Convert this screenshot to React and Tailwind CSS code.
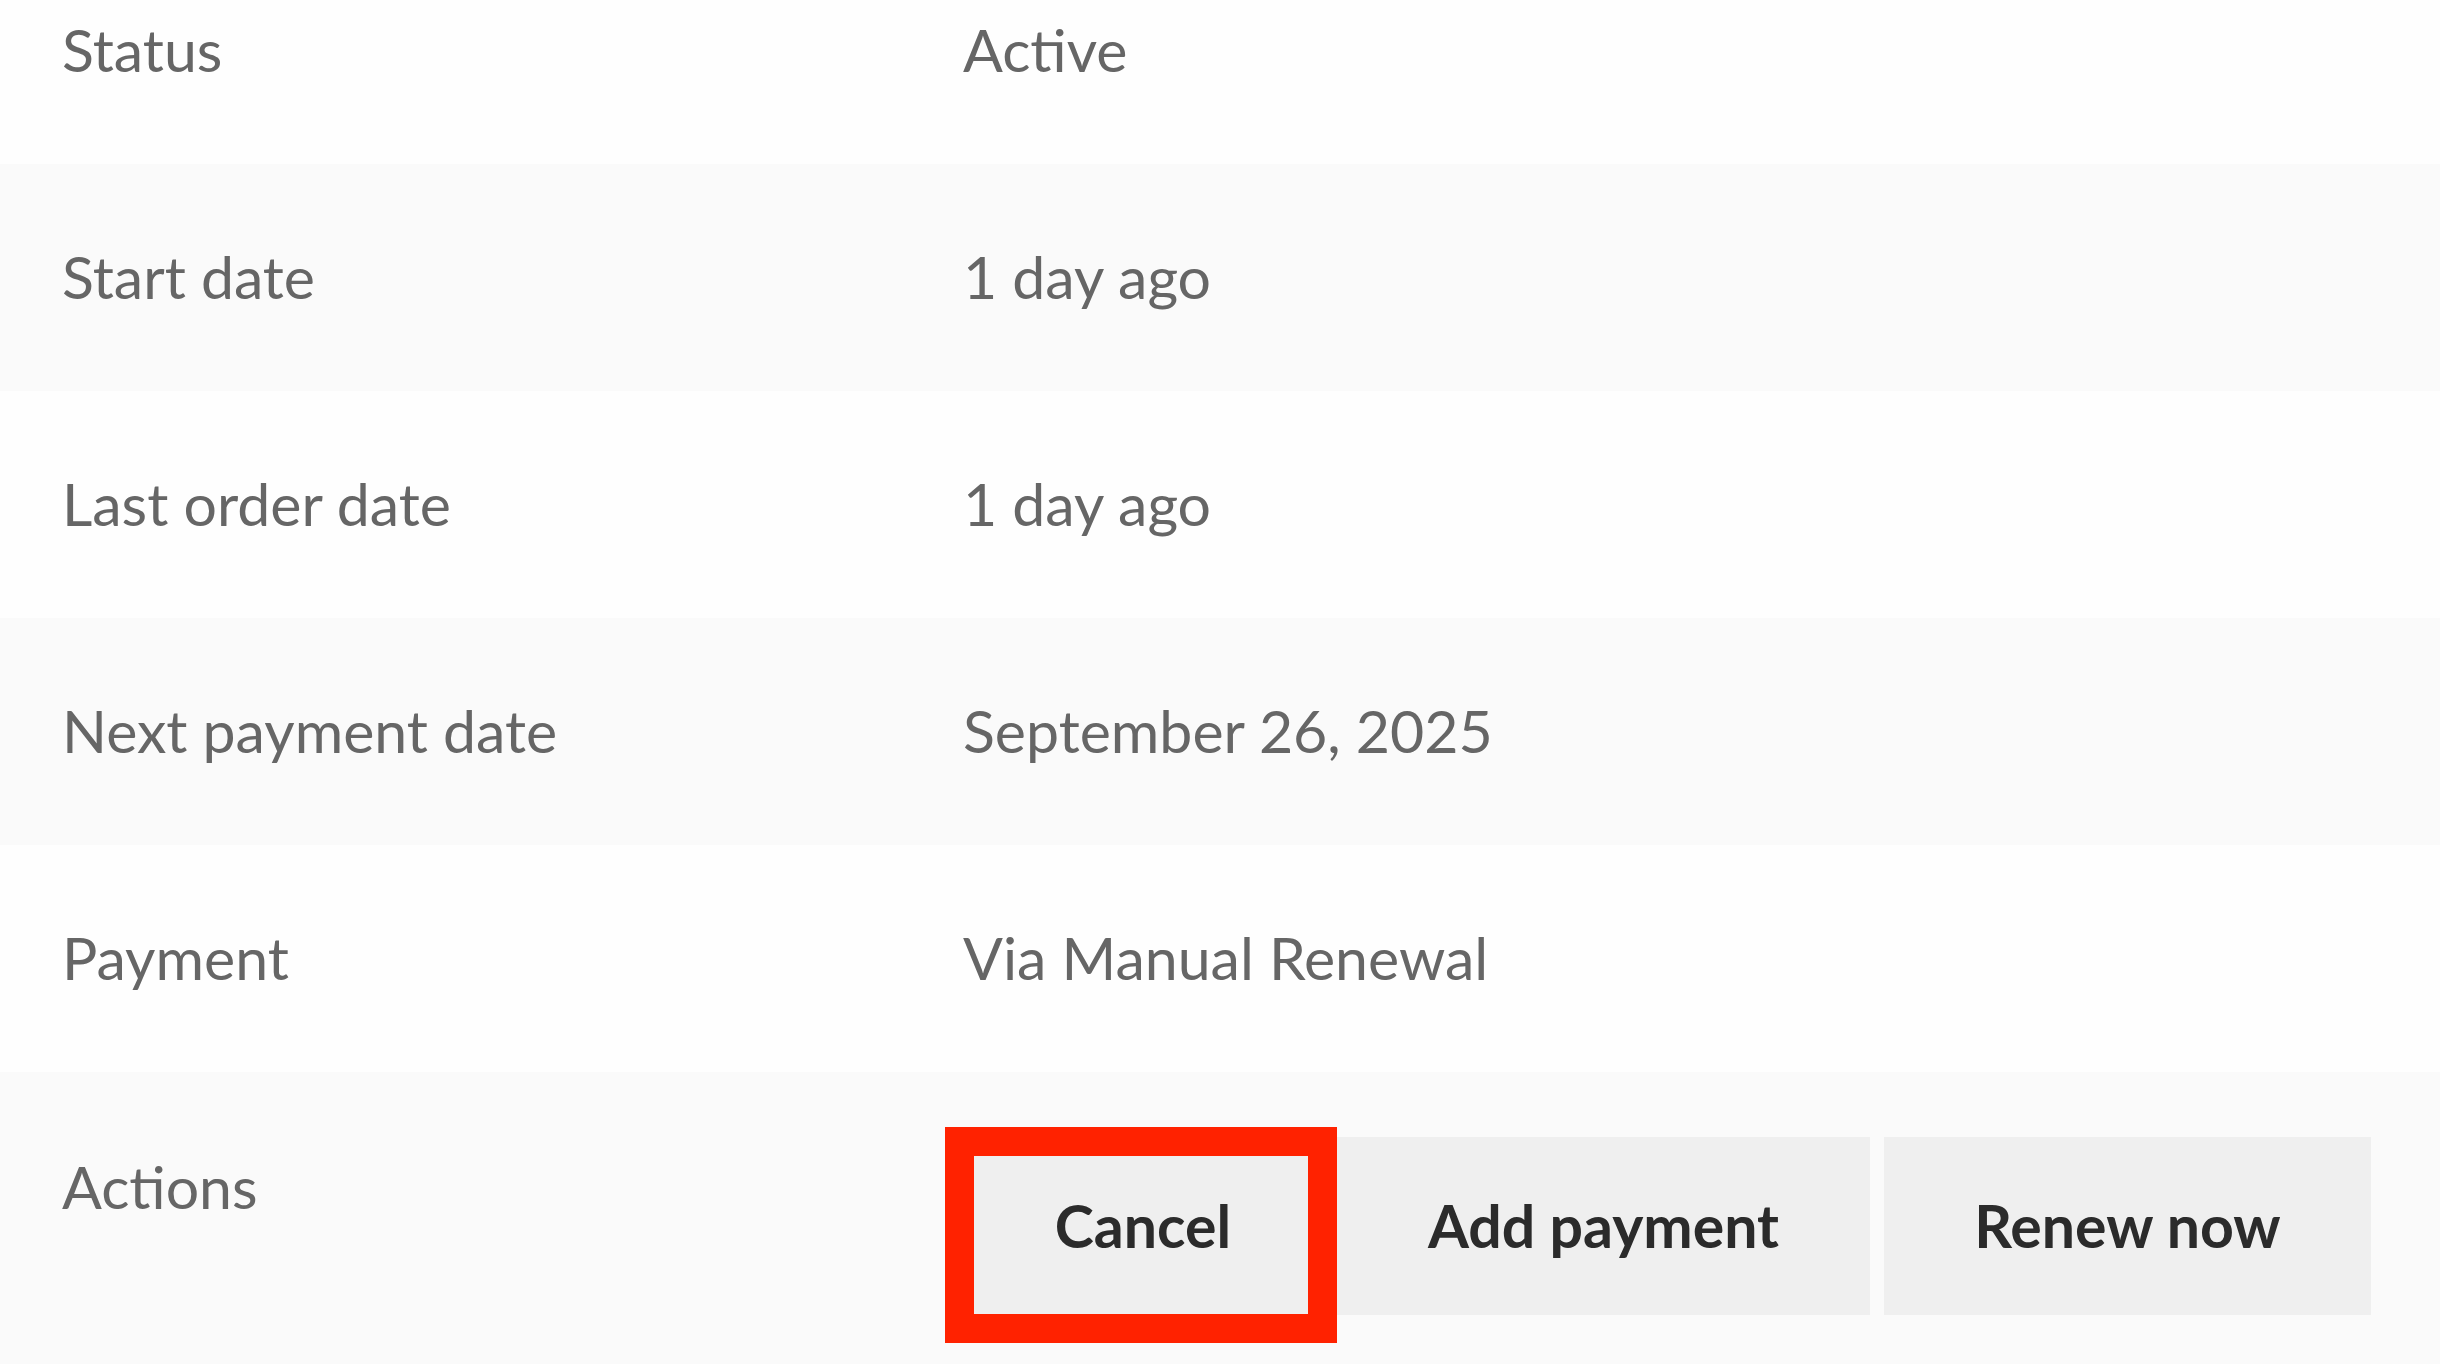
export default function App() {
    const rows = [
        { label: 'Status', value: 'Active' },
        { label: 'Start date', value: '1 day ago' },
        { label: 'Last order date', value: '1 day ago' },
        { label: 'Next payment date', value: 'September 26, 2025' },
        { label: 'Payment', value: 'Via Manual Renewal' },
    ];

    return (
        <div className="w-[2440px] h-[1364px] overflow-hidden bg-[#fefefe] text-[59px] leading-[96px] text-[#666666]" style={{ fontFamily: 'Lato, "Liberation Sans", sans-serif' }}>
            <div className="-mt-[63px]">
                {rows.map((row, index) => (
                    <div
                        key={row.label}
                        className={`grid grid-cols-[963px_1fr] h-[227px] pt-[65px] ${index % 2 === 1 ? 'bg-[#fafafa]' : 'bg-[#fefefe]'}`}
                    >
                        <div className="pl-[62px]">{row.label}</div>
                        <div>{row.value}</div>
                    </div>
                ))}

                {/* Actions */}
                <div className="grid grid-cols-[963px_1fr] pt-[65px] pb-[60px] bg-[#fafafa]">
                    <div className="pl-[62px] pt-[2px]">Actions</div>
                    <div className="flex items-start gap-[14px] font-bold text-[#2b2b2b]">
                        <div className="relative">
                            <button className="w-[360px] h-[178px] bg-[#efefef] flex items-center justify-center">
                                Cancel
                            </button>
                            <div className="absolute -left-[18px] -top-[10px] w-[392px] h-[216px] border-[29px] border-[#ff2200]" />
                        </div>
                        <button className="w-[533px] h-[178px] bg-[#efefef] flex items-center justify-center">
                            Add payment
                        </button>
                        <button className="w-[487px] h-[178px] bg-[#efefef] flex items-center justify-center">
                            Renew now
                        </button>
                    </div>
                </div>
            </div>
        </div>
    );
}
